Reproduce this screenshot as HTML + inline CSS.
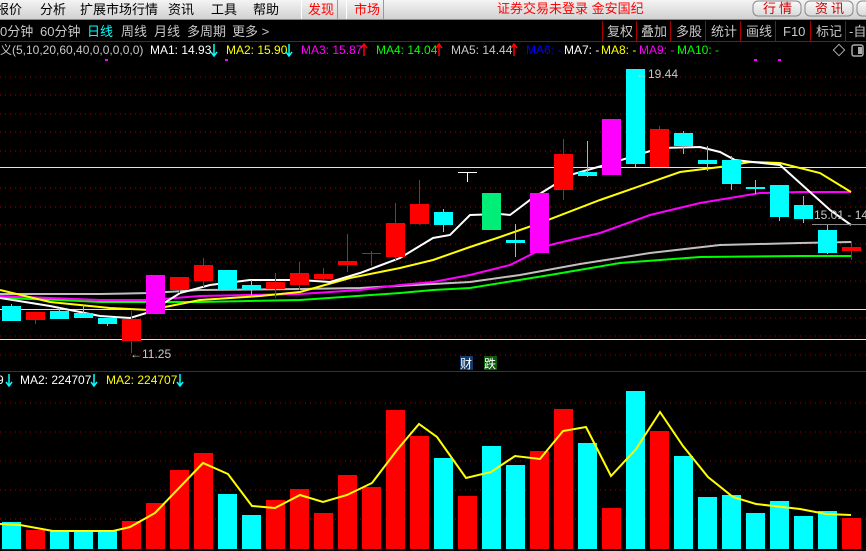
<!DOCTYPE html>
<html><head><meta charset="utf-8"><style>
body{margin:0;width:866px;height:551px;overflow:hidden;background:#000;font-family:"Liberation Sans","Noto Sans CJK SC",sans-serif;}
svg{position:absolute;left:0;top:0}
</style></head><body>
<svg width="866" height="551" xmlns="http://www.w3.org/2000/svg" font-family="Liberation Sans, Noto Sans CJK SC, sans-serif">
<defs><linearGradient id="g" x1="0" y1="0" x2="0" y2="1"><stop offset="0" stop-color="#f4f4f4"/><stop offset="1" stop-color="#cfcfcf"/></linearGradient>
<linearGradient id="b" x1="0" y1="0" x2="0" y2="1"><stop offset="0" stop-color="#fafafa"/><stop offset="1" stop-color="#d8d8d8"/></linearGradient></defs>
<rect x="0" y="0" width="866" height="20" fill="url(#g)"/>
<rect x="0" y="19" width="866" height="1" fill="#888"/>
<g font-size="13" fill="#000">
<text x="-4" y="14">报价</text><text x="40" y="14">分析</text><text x="80" y="14">扩展市场行情</text><text x="168" y="14">资讯</text><text x="211" y="14">工具</text><text x="253" y="14">帮助</text>
</g>
<rect x="301" y="0" width="1" height="19" fill="#fff"/><rect x="337" y="0" width="1" height="19" fill="#999"/>
<rect x="346" y="0" width="1" height="19" fill="#fff"/><rect x="383" y="0" width="1" height="19" fill="#999"/>
<text x="308" y="14" font-size="13" fill="#f00">发现</text><text x="354" y="14" font-size="13" fill="#f00">市场</text>
<text x="497" y="13" font-size="13" fill="#f00">证券交易未登录 金安国纪</text>
<rect x="753" y="1" width="48" height="15" rx="5" fill="url(#b)" stroke="#888"/>
<rect x="805" y="1" width="48" height="15" rx="5" fill="url(#b)" stroke="#888"/>
<rect x="857" y="1" width="20" height="15" rx="5" fill="url(#b)" stroke="#888"/>
<text x="763" y="13" font-size="13" fill="#c00" letter-spacing="3">行情</text><text x="815" y="13" font-size="13" fill="#c00" letter-spacing="3">资讯</text>
<g font-size="13" fill="#c8c8c8">
<text x="0" y="36">0分钟</text><text x="40" y="36">60分钟</text><text x="87" y="36" fill="#00ffff">日线</text><text x="121" y="36">周线</text><text x="154" y="36">月线</text><text x="187" y="36">多周期</text><text x="232" y="36">更多 &gt;</text>
<text x="607" y="36">复权</text><text x="641" y="36">叠加</text><text x="676" y="36">多股</text><text x="711" y="36">统计</text><text x="746" y="36">画线</text><text x="783" y="36">F10</text><text x="816" y="36">标记</text><text x="849" y="36">-自</text>
</g>
<g fill="#a00"><rect x="602" y="21" width="1" height="20"/><rect x="636" y="21" width="1" height="20"/><rect x="670" y="21" width="1" height="20"/><rect x="705" y="21" width="1" height="20"/><rect x="740" y="21" width="1" height="20"/><rect x="775" y="21" width="1" height="20"/><rect x="810" y="21" width="1" height="20"/><rect x="845" y="21" width="1" height="20"/></g>
<rect x="0" y="41" width="866" height="1" fill="#a00"/>
<g font-size="12">
<text x="0" y="54" fill="#c8c8c8">义(5,10,20,60,40,0,0,0,0,0)</text>
<text x="150" y="54" fill="#fff">MA1: 14.93</text>
<text x="226" y="54" fill="#ff0">MA2: 15.90</text>
<text x="301" y="54" fill="#f0f">MA3: 15.87</text>
<text x="376" y="54" fill="#0f0">MA4: 14.04</text>
<text x="451" y="54" fill="#c8c8c8">MA5: 14.44</text>
<text x="526" y="54" fill="#00f">MA6: -</text><text x="564" y="54" fill="#fff">MA7: -</text><text x="601" y="54" fill="#ff0">MA8: -</text><text x="639" y="54" fill="#f0f">MA9: -</text><text x="677" y="54" fill="#0f0">MA10: -</text>
</g>
<g fill="none" stroke-width="1.5">
<path d="M214 44V56M211 52L214 56L217 52" stroke="#0ff"/>
<path d="M289 44V56M286 52L289 56L292 52" stroke="#0ff"/>
<path d="M364 56V44M361 48L364 44L367 48" stroke="#f00"/>
<path d="M439 56V44M436 48L439 44L442 48" stroke="#f00"/>
<path d="M514 56V44M511 48L514 44L517 48" stroke="#f00"/>
<path d="M9 374V386M6 382L9 386L12 382" stroke="#0ff"/>
<path d="M94 374V386M91 382L94 386L97 382" stroke="#0ff"/>
<path d="M180 374V386M177 382L180 386L183 382" stroke="#0ff"/>
</g>
<rect x="835" y="46" width="8" height="8" fill="none" stroke="#aaa" transform="rotate(45 839 50)"/>
<rect x="852" y="45" width="11" height="11" rx="2" fill="none" stroke="#aaa" stroke-width="1.5"/><rect x="858" y="47" width="4" height="7" fill="#aaa"/>
<g fill="#f0f"><rect x="105" y="59" width="3" height="2"/><rect x="225" y="59" width="3" height="2"/><rect x="754" y="59" width="3" height="2"/><rect x="778" y="59" width="3" height="2"/></g>
<g stroke="#a00" stroke-dasharray="1,4">
<line x1="0" x2="866" y1="77" y2="77"/><line x1="0" x2="866" y1="95" y2="95"/><line x1="0" x2="866" y1="114" y2="114"/><line x1="0" x2="866" y1="132" y2="132"/><line x1="0" x2="866" y1="151" y2="151"/><line x1="0" x2="866" y1="188" y2="188"/><line x1="0" x2="866" y1="207" y2="207"/><line x1="0" x2="866" y1="225" y2="225"/><line x1="0" x2="866" y1="244" y2="244"/><line x1="0" x2="866" y1="262" y2="262"/><line x1="0" x2="866" y1="281" y2="281"/><line x1="0" x2="866" y1="318" y2="318"/><line x1="0" x2="866" y1="336" y2="336"/><line x1="0" x2="866" y1="355" y2="355"/>
<line x1="0" x2="866" y1="403" y2="403"/><line x1="0" x2="866" y1="432" y2="432"/><line x1="0" x2="866" y1="461" y2="461"/><line x1="0" x2="866" y1="490" y2="490"/><line x1="0" x2="866" y1="519" y2="519"/>
</g>
<g fill="#ff0"><rect x="0" y="167" width="866" height="1"/><rect x="0" y="309" width="866" height="1"/><rect x="0" y="339" width="866" height="1"/></g>
<rect x="0" y="371" width="866" height="1" fill="#a00"/>
<g fill="none" stroke-width="2">
<polyline stroke="#0f0" points="0,298 60,300 100,302 200,302 300,300 400,293 433,290 470,288 550,275 620,263 700,257 800,256 851,256"/>
<polyline stroke="#c0c0c0" points="0,294 100,294 150,293 200,290 300,289 360,288 433,284 470,282 520,275 580,264 650,253 720,245 800,243 851,242"/>
<polyline stroke="#f0f" points="0,296 100,300 150,300 200,296 300,294 360,290 400,285 433,282 470,275 510,265 550,245 600,233 650,215 700,203 760,193 800,192 851,192"/>
<polyline stroke="#ff0" points="0,290 50,302 110,308 150,310 200,300 260,296 300,292 350,278 400,268 433,260 470,247 500,237 540,223 600,200 680,172 720,167 750,162 780,163 820,173 851,192"/>
<polyline stroke="#fff" points="0,298 50,306 100,316 130,318 150,312 180,293 210,285 250,280 300,280 330,282 360,273 400,258 433,238 450,235 470,215 500,214 510,215 530,200 570,175 605,165 660,148 700,147 720,152 735,160 780,165 800,183 830,210 851,225"/>
</g>
<g>
<g fill="#0ff">
<rect x="2" y="306" width="19" height="15"/><rect x="11" y="304" width="1" height="3"/>
<rect x="50" y="311" width="19" height="8"/><rect x="59" y="308" width="1" height="4"/>
<rect x="74" y="313" width="19" height="5"/><rect x="83" y="305" width="1" height="9"/>
<rect x="98" y="318" width="19" height="6"/><rect x="107" y="318" width="1" height="8"/>
<rect x="218" y="270" width="19" height="20"/>
<rect x="242" y="285" width="19" height="5"/><rect x="251" y="280" width="1" height="17"/>
<rect x="434" y="212" width="19" height="13"/><rect x="443" y="209" width="1" height="23"/>
<rect x="506" y="240" width="19" height="3"/><rect x="515" y="224" width="1" height="33"/>
<rect x="578" y="172" width="19" height="4"/><rect x="587" y="141" width="1" height="36"/>
<rect x="626" y="69" width="19" height="95"/><rect x="635" y="164" width="1" height="3"/>
<rect x="674" y="133" width="19" height="13"/><rect x="683" y="131" width="1" height="23"/>
<rect x="698" y="160" width="19" height="4"/><rect x="707" y="146" width="1" height="25"/>
<rect x="722" y="160" width="19" height="24"/><rect x="731" y="156" width="1" height="34"/>
<rect x="746" y="187" width="19" height="2"/><rect x="755" y="180" width="1" height="14"/>
<rect x="770" y="185" width="19" height="32"/><rect x="779" y="217" width="1" height="4"/>
<rect x="794" y="205" width="19" height="14"/><rect x="803" y="196" width="1" height="27"/>
<rect x="818" y="230" width="19" height="23"/><rect x="827" y="225" width="1" height="29"/>
</g>
<g fill="#f00">
<rect x="26" y="312" width="19" height="8"/><rect x="35" y="312" width="1" height="12"/>
<rect x="122" y="319" width="19" height="22"/><rect x="131" y="311" width="1" height="42"/>
<rect x="170" y="277" width="19" height="13"/><rect x="179" y="277" width="1" height="16"/>
<rect x="194" y="265" width="19" height="16"/><rect x="203" y="258" width="1" height="29"/>
<rect x="266" y="282" width="19" height="7"/><rect x="275" y="273" width="1" height="25"/>
<rect x="290" y="273" width="19" height="12"/><rect x="299" y="262" width="1" height="28"/>
<rect x="314" y="274" width="19" height="5"/><rect x="323" y="268" width="1" height="12"/>
<rect x="338" y="261" width="19" height="4"/><rect x="347" y="234" width="1" height="38"/>
<rect x="362" y="253" width="19" height="1"/><rect x="371" y="251" width="1" height="15"/>
<rect x="386" y="223" width="19" height="34"/><rect x="395" y="203" width="1" height="57"/>
<rect x="410" y="204" width="19" height="20"/><rect x="419" y="180" width="1" height="45"/>
<rect x="554" y="154" width="19" height="36"/><rect x="563" y="139" width="1" height="61"/>
<rect x="650" y="129" width="19" height="38"/><rect x="659" y="126" width="1" height="4"/>
<rect x="842" y="247" width="19" height="4"/><rect x="851" y="241" width="1" height="19"/>
</g>
<rect x="146" y="275" width="19" height="39" fill="#f0f"/>
<rect x="530" y="193" width="19" height="60" fill="#f0f"/>
<rect x="602" y="119" width="19" height="56" fill="#f0f"/>
<rect x="482" y="193" width="19" height="37" fill="#00ee77"/>
<rect x="458" y="172" width="19" height="1" fill="#fff"/><rect x="467" y="172" width="1" height="10" fill="#fff"/>
</g>
<g font-size="12" fill="#c8c8c8">
<text x="130" y="358">←11.25</text>
<text x="636" y="78">←19.44</text>
<text x="814" y="219">15.01 - 14</text>
</g>
<rect x="812" y="224" width="54" height="1" fill="#888"/>
<rect x="460" y="356" width="13" height="14" fill="#123a6a"/><text x="460" y="368" font-size="12" fill="#fff">财</text>
<rect x="484" y="356" width="13" height="14" fill="#0a5a0a"/><text x="484" y="368" font-size="12" fill="#fff">跌</text>
<g font-size="12">
<text x="-3" y="384" fill="#fff">9</text>
<text x="20" y="384" fill="#fff">MA2: 224707</text>
<text x="106" y="384" fill="#ff0">MA2: 224707</text>
</g>
<g fill="#0ff">
<rect x="2" y="522" width="19" height="27"/><rect x="50" y="531" width="19" height="18"/><rect x="74" y="531" width="19" height="18"/><rect x="98" y="531" width="19" height="18"/>
<rect x="218" y="494" width="19" height="55"/><rect x="242" y="515" width="19" height="34"/>
<rect x="434" y="458" width="19" height="91"/><rect x="482" y="446" width="19" height="103"/><rect x="506" y="465" width="19" height="84"/>
<rect x="578" y="443" width="19" height="106"/><rect x="626" y="391" width="19" height="158"/><rect x="674" y="456" width="19" height="93"/>
<rect x="698" y="497" width="19" height="52"/><rect x="722" y="495" width="19" height="54"/><rect x="746" y="513" width="19" height="36"/><rect x="770" y="501" width="19" height="48"/><rect x="794" y="516" width="19" height="33"/><rect x="818" y="511" width="19" height="38"/>
</g>
<g fill="#f00">
<rect x="26" y="530" width="19" height="19"/><rect x="122" y="521" width="19" height="28"/><rect x="146" y="503" width="19" height="46"/><rect x="170" y="470" width="19" height="79"/><rect x="194" y="453" width="19" height="96"/>
<rect x="266" y="500" width="19" height="49"/><rect x="290" y="489" width="19" height="60"/><rect x="314" y="513" width="19" height="36"/><rect x="338" y="475" width="19" height="74"/><rect x="362" y="487" width="19" height="62"/><rect x="386" y="410" width="19" height="139"/><rect x="410" y="436" width="19" height="113"/>
<rect x="458" y="496" width="19" height="53"/><rect x="530" y="451" width="19" height="98"/><rect x="554" y="409" width="19" height="140"/><rect x="602" y="508" width="19" height="41"/><rect x="650" y="431" width="19" height="118"/><rect x="842" y="518" width="19" height="31"/>
</g>
<polyline fill="none" stroke="#ff0" stroke-width="2" points="0,524 20,525 53,531 113,531 130,527 155,513 203,463 228,474 252,506 275,508 300,495 323,502 347,495 372,483 397,450 419,424 437,437 466,478 491,472 515,456 540,459 563,431 586,427 611,476 636,449 660,412 683,446 708,477 733,497 756,504 800,509 826,514 851,515"/>
</svg>
</body></html>
